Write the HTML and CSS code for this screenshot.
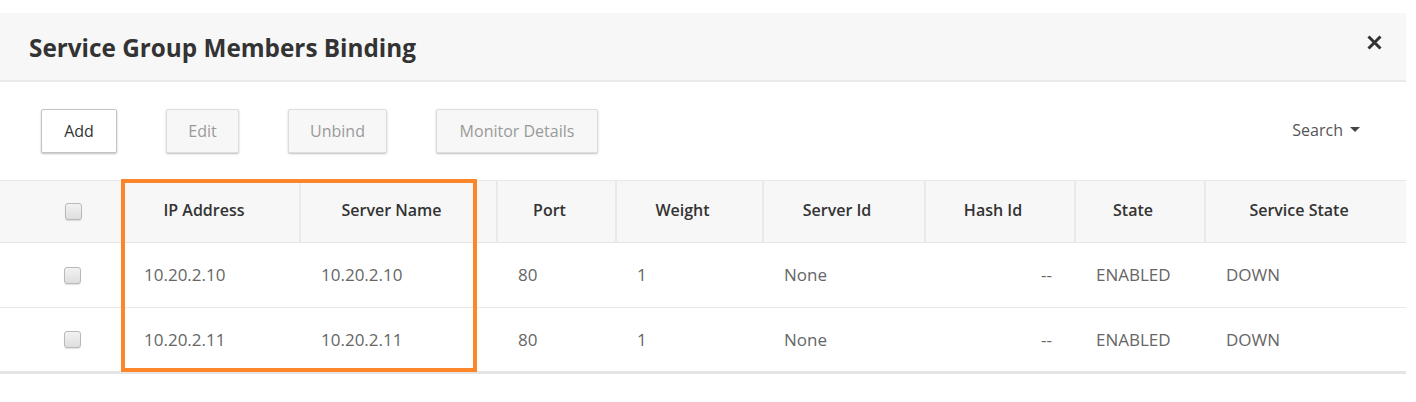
FILE: index.html
```html
<!DOCTYPE html>
<html>
<head>
<meta charset="utf-8">
<link rel="stylesheet" href="styles.css">
</head>
<body>
<div class="dialog">
  <div class="dialog-header">
    <h1 class="title">Service Group Members Binding</h1>
    <button class="close" aria-label="Close">
      <svg width="15" height="15" viewBox="0 0 15 15"><path d="M1.5 1.5 L13.5 13.5 M13.5 1.5 L1.5 13.5" stroke="#333" stroke-width="3" stroke-linecap="butt"/></svg>
    </button>
  </div>
  <div class="toolbar">
    <div class="actions">
      <button class="btn btn-active w-add">Add</button>
      <button class="btn btn-disabled w-edit">Edit</button>
      <button class="btn btn-disabled w-unbind">Unbind</button>
      <button class="btn btn-disabled w-monitor">Monitor Details</button>
    </div>
    <div class="search">Search <span class="caret"></span></div>
  </div>
  <div class="table-wrap">
    <table class="grid">
      <colgroup>
        <col class="c-check"><col class="c-ip"><col class="c-name"><col class="c-port"><col class="c-weight"><col class="c-sid"><col class="c-hash"><col class="c-state"><col class="c-sstate">
      </colgroup>
      <thead>
        <tr>
          <th class="chk-cell"><span class="checkbox"></span></th>
          <th class="no-sep">IP Address</th>
          <th>Server Name</th>
          <th>Port</th>
          <th>Weight</th>
          <th>Server Id</th>
          <th>Hash Id</th>
          <th>State</th>
          <th>Service State</th>
        </tr>
      </thead>
      <tbody>
        <tr>
          <td class="chk-cell"><span class="checkbox row-box"></span></td>
          <td>10.20.2.10</td>
          <td>10.20.2.10</td>
          <td>80</td>
          <td>1</td>
          <td>None</td>
          <td class="right">--</td>
          <td>ENABLED</td>
          <td>DOWN</td>
        </tr>
        <tr>
          <td class="chk-cell"><span class="checkbox row-box"></span></td>
          <td>10.20.2.11</td>
          <td>10.20.2.11</td>
          <td>80</td>
          <td>1</td>
          <td>None</td>
          <td class="right">--</td>
          <td>ENABLED</td>
          <td>DOWN</td>
        </tr>
      </tbody>
    </table>
    <div class="highlight"></div>
  </div>
</div>
</body>
</html>
```

FILE: styles.css
```css
* { box-sizing: border-box; }

html, body {
  margin: 0;
  padding: 0;
  background: #ffffff;
  font-family: "Open Sans", "Noto Sans", sans-serif;
}

.dialog {
  width: 1406px;
  margin-top: 13px;
}

.dialog-header {
  height: 69px;
  background: #f7f7f7;
  border-bottom: 2px solid #e9e9e9;
  display: flex;
  align-items: center;
  justify-content: space-between;
  padding: 0 24px 0 29px;
}

.title {
  margin: 0;
  font-size: 24.3px;
  font-weight: 700;
  color: #333333;
  letter-spacing: 0;
  padding-top: 1px;
}

.close {
  border: 0;
  background: transparent;
  padding: 0;
  width: 15px;
  height: 15px;
  display: block;
  margin-top: -9px;
}
.close svg { display: block; }

.toolbar {
  height: 98px;
  display: flex;
  align-items: center;
  justify-content: space-between;
  padding: 0 46px 0 41px;
}

.actions {
  display: flex;
  gap: 49px;
}

.btn {
  height: 44px;
  padding: 0;
  text-align: center;
  font-family: "Open Sans", "Noto Sans", sans-serif;
  font-size: 16px;
  border-radius: 2px;
  border: 1px solid #cfcfcf;
  box-shadow: 0 1px 2px rgba(0,0,0,0.25);
}

.w-add { width: 76px; }
.w-edit { width: 73px; }
.w-unbind { width: 99px; }
.w-monitor { width: 162px; }

.btn-active {
  background: #ffffff;
  color: #333333;
  border-color: #c4c4c4;
}

.btn-disabled {
  background: #f7f7f7;
  color: #9a9a9a;
  border-color: #dddddd;
}

.search {
  font-size: 16px;
  color: #555555;
  display: flex;
  align-items: center;
  gap: 7px;
  margin-top: -3px;
}

.caret {
  width: 0;
  height: 0;
  border-left: 5px solid transparent;
  border-right: 5px solid transparent;
  border-top: 5px solid #444444;
}

.table-wrap {
  position: relative;
}

.grid {
  width: 1406px;
  table-layout: fixed;
  border-collapse: collapse;
  border-bottom: 3px solid #e5e5e5;
}

.c-check { width: 123px; }
.c-ip { width: 177px; }
.c-name { width: 197px; }
.c-port { width: 119px; }
.c-weight { width: 147px; }
.c-sid { width: 162px; }
.c-hash { width: 150px; }
.c-state { width: 130px; }
.c-sstate { width: 201px; }

.grid thead tr {
  background: #f7f7f7;
  border-top: 1px solid #e8e8e8;
  height: 62px;
}

.grid th {
  font-size: 16px;
  font-weight: 600;
  color: #333333;
  text-align: center;
  padding: 0 14px 4px 0;
  border-left: 2px solid #e9e9e9;
  border-bottom: 1px solid #e5e5e5;
}

.grid th.chk-cell,
.grid th.no-sep { border-left: 0; }

.grid tbody tr {
  height: 65px;
  border-bottom: 1px solid #e8e8e8;
}

.grid td {
  font-size: 17px;
  color: #666666;
  padding: 0 0 1px 21px;
  text-align: left;
}

.grid td.right {
  text-align: right;
  padding: 0 23px 1px 0;
}

.grid .chk-cell {
  padding: 0 0 0 65px;
  text-align: left;
}
.grid td.chk-cell { padding-left: 64px; }

.checkbox {
  display: block;
  width: 17px;
  height: 17px;
  border: 1px solid #b9b9b9;
  border-radius: 3px;
  background: linear-gradient(#f2f2f2, #dedede);
  box-shadow: 0 1px 1px rgba(0,0,0,0.12);
}

.highlight {
  position: absolute;
  left: 121px;
  top: -1px;
  width: 356px;
  height: 193px;
  border: 4px solid #fd852a;
  pointer-events: none;
}
```
